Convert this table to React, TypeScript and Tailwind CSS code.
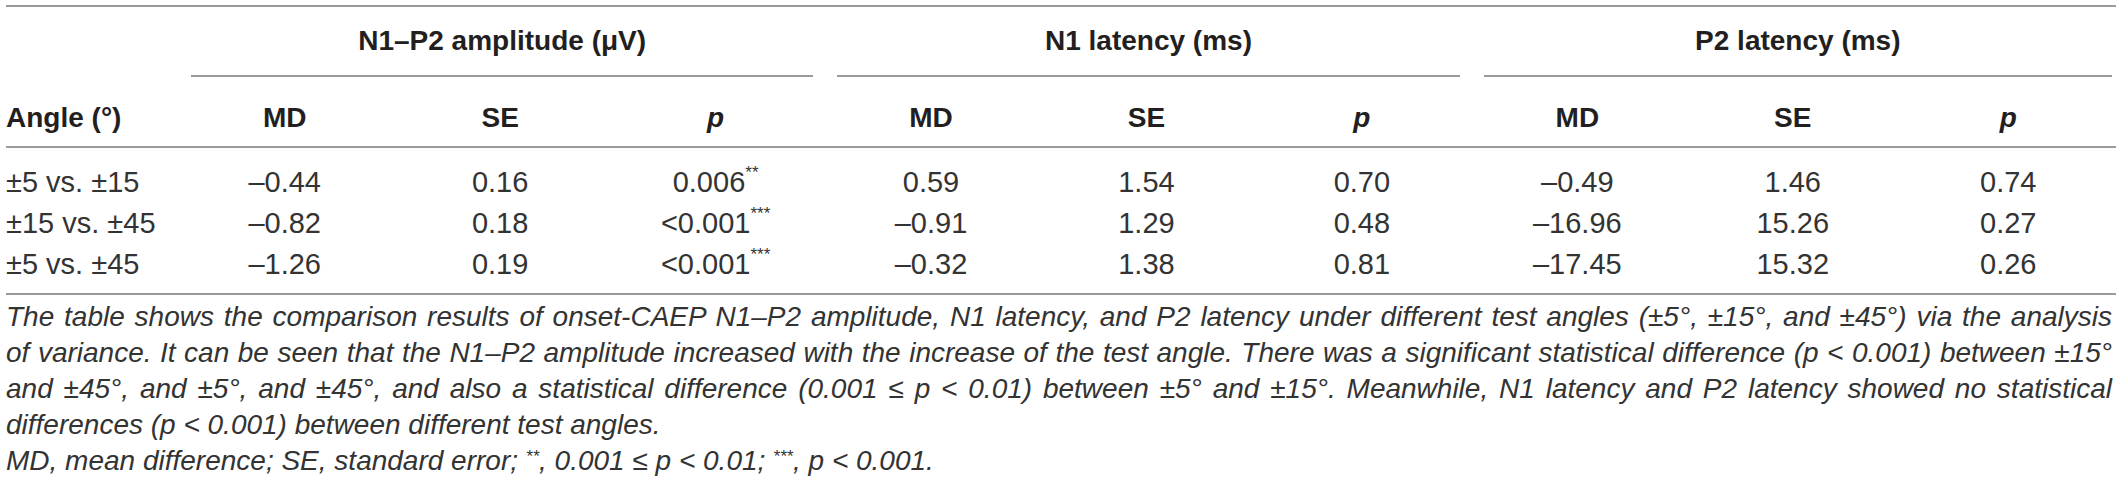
import React from 'react';

type Row = { angle: string; cells: string[] };

const rows: Row[] = [
  { angle: '±5 vs. ±15', cells: ['–0.44', '0.16', '0.006|**', '0.59', '1.54', '0.70', '–0.49', '1.46', '0.74'] },
  { angle: '±15 vs. ±45', cells: ['–0.82', '0.18', '<0.001|***', '–0.91', '1.29', '0.48', '–16.96', '15.26', '0.27'] },
  { angle: '±5 vs. ±45', cells: ['–1.26', '0.19', '<0.001|***', '–0.32', '1.38', '0.81', '–17.45', '15.32', '0.26'] },
];

const groups = ['N1–P2 amplitude (μV)', 'N1 latency (ms)', 'P2 latency (ms)'];

// value with an optional superscript part after "|"
const Cell = ({ value }: { value: string }) => {
  const [main, sup] = value.split('|');
  return (
    <>
      {main}
      {sup && <sup className="relative top-[-3px] text-[17px] align-super leading-none">{sup}</sup>}
    </>
  );
};

export default function App() {
  return (
    <div className="bg-white w-[2118px] h-[491px] pt-[5px] px-[6px] text-[#231f20]" style={{ fontFamily: '"Liberation Sans", Arial, sans-serif' }}>
      <table className="w-[2110px] table-fixed border-collapse border-t-2 border-[#9a9a9a]">
        <colgroup>
          <col className="w-[171px]" />
          {Array.from({ length: 9 }).map((_, i) => (
            <col key={i} />
          ))}
        </colgroup>
        <thead>
          <tr>
            <th className="p-0" />
            {groups.map((g, i) => (
              <th key={g} colSpan={3} className={`p-0 pl-[14px] ${i === 2 ? 'pr-[4px]' : 'pr-[10px]'}`}>
                <div className="h-[70px] flex items-center justify-center border-b-2 border-[#9a9a9a] text-[28px] font-bold leading-none">
                  {g}
                </div>
              </th>
            ))}
          </tr>
          <tr className="border-b-2 border-[#9a9a9a]">
            <th className="pt-[25px] pb-[12px] px-0 text-left text-[28px] leading-[32px] font-bold">Angle (°)</th>
            {groups.map((g) =>
              ['MD', 'SE', 'p'].map((h) => (
                <th
                  key={g + h}
                  className={`pt-[25px] pb-[12px] px-0 text-center text-[28px] leading-[32px] font-bold ${h === 'p' ? 'italic' : ''}`}
                >
                  {h}
                </th>
              ))
            )}
          </tr>
        </thead>
        <tbody className="border-b-2 border-[#9a9a9a] text-[#333333]">
          {rows.map((r, ri) => (
            <tr key={r.angle}>
              <td className={`p-0 text-[29px] leading-[41px] text-left whitespace-nowrap ${ri === 0 ? 'pt-[14px]' : ''} ${ri === 2 ? 'pb-[8px]' : ''}`}>
                {r.angle}
              </td>
              {r.cells.map((c, ci) => (
                <td
                  key={ci}
                  className={`p-0 text-[29px] leading-[41px] text-center whitespace-nowrap ${ri === 0 ? 'pt-[14px]' : ''} ${ri === 2 ? 'pb-[8px]' : ''}`}
                >
                  <Cell value={c} />
                </td>
              ))}
            </tr>
          ))}
        </tbody>
      </table>

      {/* caption: first three lines justified to the table width, as in the print layout */}
      <div className="w-[2106px] pt-[4px] text-[28px] leading-[36px] italic text-[#333333]">
        <p className="text-justify [text-align-last:justify]">
          The table shows the comparison results of onset-CAEP N1–P2 amplitude, N1 latency, and P2 latency under different test angles (±5°, ±15°, and ±45°) via the analysis
        </p>
        <p className="text-justify [text-align-last:justify]">
          of variance. It can be seen that the N1–P2 amplitude increased with the increase of the test angle. There was a significant statistical difference (p &lt; 0.001) between ±15°
        </p>
        <p className="text-justify [text-align-last:justify]">
          and ±45°, and ±5°, and ±45°, and also a statistical difference (0.001 ≤ p &lt; 0.01) between ±5° and ±15°. Meanwhile, N1 latency and P2 latency showed no statistical
        </p>
        <p>differences (p &lt; 0.001) between different test angles.</p>
        <p>
          MD, mean difference; SE, standard error; <sup className="text-[17px]">**</sup>, 0.001 ≤ p &lt; 0.01; <sup className="text-[17px]">***</sup>, p &lt; 0.001.
        </p>
      </div>
    </div>
  );
}
